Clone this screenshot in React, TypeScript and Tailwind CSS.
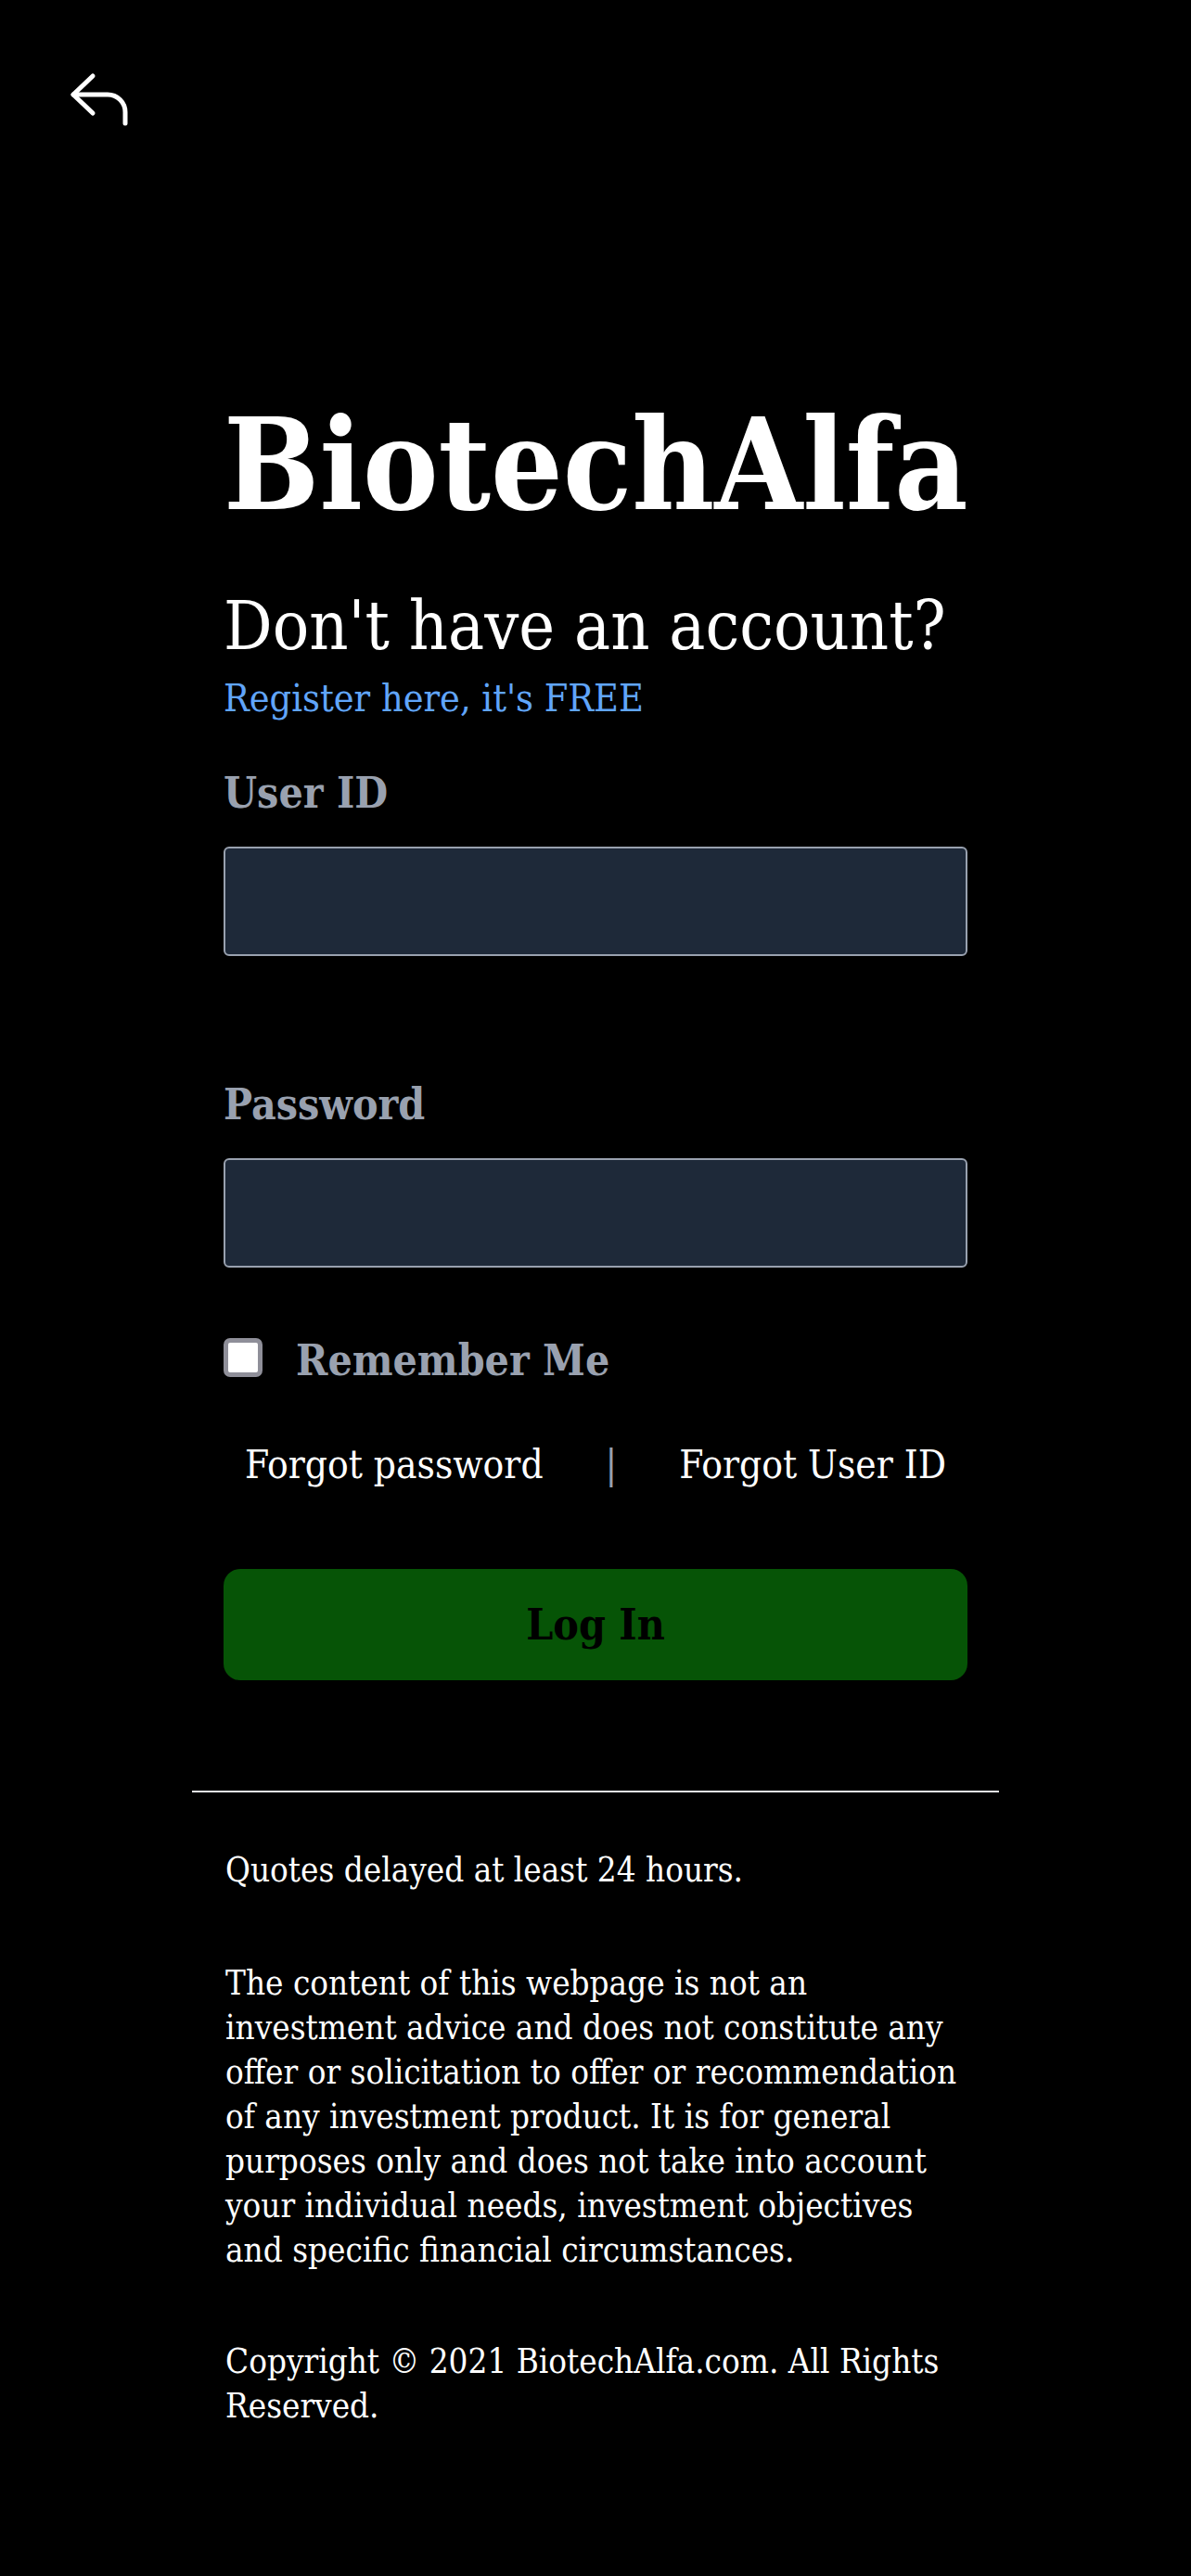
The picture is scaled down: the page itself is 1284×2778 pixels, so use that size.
import { useState } from 'react'

function BackIcon() {
  return (
    <svg width="72" height="66" viewBox="0 0 72 66" fill="none" stroke="currentColor" strokeWidth="5" strokeLinecap="round" strokeLinejoin="round">
      <polyline points="30 8 9 28 30 48" />
      <path d="M9 28H46a19 19 0 0 1 19 19V59" />
    </svg>
  )
}

export default function App() {
  const [userId, setUserId] = useState('')
  const [password, setPassword] = useState('')
  const [remember, setRemember] = useState(false)

  return (
    <div className="min-h-screen bg-black text-white font-['DejaVu_Serif_Condensed','DejaVu_Serif',serif]">
      {/* Back */}
      <div className="pt-[74px] pl-[70px]">
        <button className="block text-white">
          <BackIcon />
        </button>
      </div>

      <div className="mx-auto w-[802px]">
        <h1 className="mt-[286px] text-[136px] leading-[150px] font-bold whitespace-nowrap">BiotechAlfa</h1>
        <p className="mt-[59px] text-[73px] leading-[80px] whitespace-nowrap">Don't have an account?</p>
        <a href="#" className="mt-[14px] block text-[41px] leading-[48px] text-[#60a5fa]">
          Register here, it's FREE
        </a>

        <label className="mt-[50px] block text-[46px] leading-[56px] font-semibold text-gray-400">User ID</label>
        <input
          value={userId}
          onChange={(e) => setUserId(e.target.value)}
          className="mt-[30px] block h-[118px] w-full rounded-[6px] border-2 border-gray-400 bg-gray-800 px-6 text-[44px] text-white outline-none"
        />

        <label className="mt-[132px] block text-[46px] leading-[56px] font-semibold text-gray-400">Password</label>
        <input
          type="password"
          value={password}
          onChange={(e) => setPassword(e.target.value)}
          className="mt-[30px] block h-[118px] w-full rounded-[6px] border-2 border-gray-400 bg-gray-800 px-6 text-[44px] text-white outline-none"
        />

        {/* Remember me */}
        <div className="mt-[72px] flex items-start gap-[36px]">
          <button
            onClick={() => setRemember(!remember)}
            className="mt-[4px] h-[42px] w-[42px] shrink-0 rounded-[7px] border-[5px] border-[#8f8f99] bg-white"
          >
            {remember && <span className="block h-full w-full bg-blue-600" />}
          </button>
          <span className="text-[46px] leading-[56px] font-semibold text-gray-400">Remember Me</span>
        </div>

        {/* Forgot links */}
        <div className="mt-[61px] flex items-center justify-between px-[23px] text-[42px] leading-[48px]">
          <a href="#" className="whitespace-nowrap">Forgot password</a>
          <span className="text-gray-400">|</span>
          <a href="#" className="whitespace-nowrap">Forgot User ID</a>
        </div>

        <button className="mt-[88px] flex h-[120px] w-full items-center justify-center rounded-[18px] bg-[#065406] text-[46px] leading-[56px] font-bold text-black">
          Log In
        </button>
      </div>

      <div className="mx-auto mt-[119px] h-[2px] w-[870px] bg-gray-200" />

      {/* Footer */}
      <div className="mx-auto w-[802px] pb-[200px] pl-[2px] text-[36.5px] leading-[48px]">
        <p className="mt-[60px]">Quotes delayed at least 24 hours.</p>
        <p className="mt-[74px]">
          The content of this webpage is not an investment advice and does not constitute any offer or solicitation to
          offer or recommendation of any investment product. It is for general purposes only and does not take into
          account your individual needs, investment objectives and specific financial circumstances.
        </p>
        <p className="mt-[72px]">Copyright © 2021 BiotechAlfa.com. All Rights Reserved.</p>
      </div>
    </div>
  )
}
